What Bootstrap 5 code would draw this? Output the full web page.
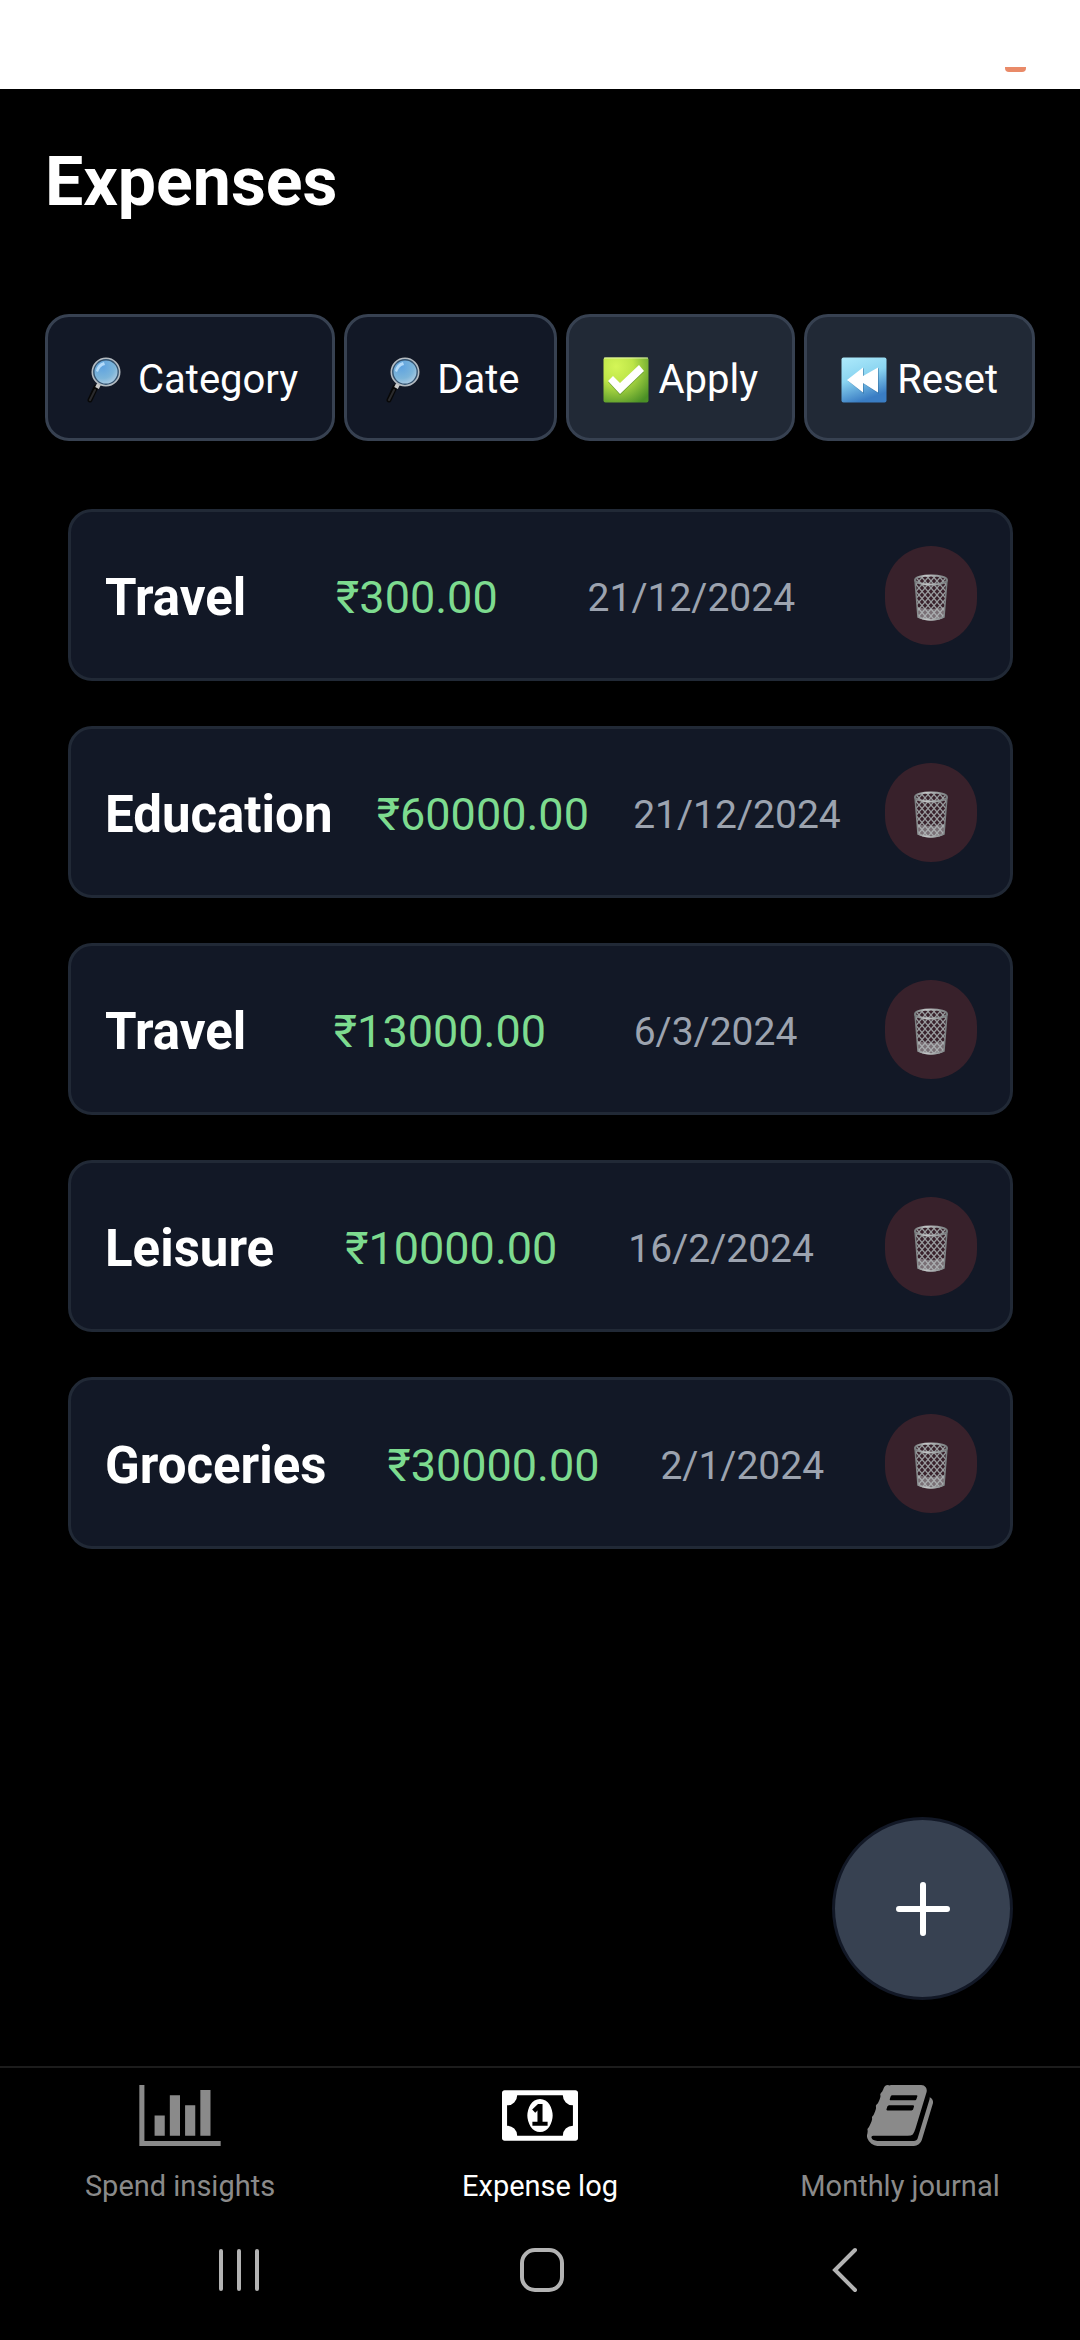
<!DOCTYPE html>
<html lang="en">
<head>
<meta charset="utf-8">
<meta name="viewport" content="width=device-width, initial-scale=1">
<title>Expenses</title>
<link href="https://cdn.jsdelivr.net/npm/bootstrap@5.3.0/dist/css/bootstrap.min.css" rel="stylesheet">
<style>
body{background:#000;color:#fff;font-family:Roboto,"Noto Sans",sans-serif}
svg{display:block;flex:none}
.status-strip{height:89px;padding:0 54px 17px;background:#fff}
.status-strip span{width:21px;height:5px;border-radius:0 0 4px 4px;background:#e98a68}
.page-body{padding:47px 45px 66px}
.page-title{font-size:68px;line-height:92px;font-weight:700;margin:0 0 86px}
.filter-row{gap:9px}
.filter-btn{height:127px;padding:4px 34px 0;border:3px solid #374151;border-radius:24px;background:#121826;color:#fff;font-size:40px;line-height:46px;gap:10px}
.filter-btn.solid{background:#212936}
.filter-btn:hover{border-color:#374151;background:#212936;color:#fff}
.expense-list{padding:68px 22px 45px 23px;gap:45px;margin:0}
.expense-item{height:172px;padding:0 33px 0 34px;border:3px solid #212936;border-radius:24px;background:#121826}
.expense-item span{padding-top:6px}
.item-name{font-size:51px;line-height:68px;font-weight:700}
.item-sum{font-size:45px;line-height:60px;color:#7ddb8f}
.item-date{font-size:39px;line-height:54px;color:#9ca3af}
.item-del{width:92px;height:99px;padding:6px 0 0;border:0;border-radius:46px;background:#38212b}
.add-btn{width:181px;height:183px;padding:0;border:3px solid #121826;border-radius:50%;background:#374151;margin-right:22px}
.tab-strip{border-top:2px solid #1c1c1c;padding-top:17px;height:156px}
.tab-link{color:#8a8a8a;font-size:29px;line-height:40px;text-decoration:none;gap:20px}
.tab-link.current{color:#fff}
.tab-link:hover{color:#fff}
.sys-strip{height:118px;padding:0 84px 22px 88px}
.sys-btn{height:96px;padding:0;border:0;background:none}
</style>
</head>
<body class="d-flex flex-column min-vh-100">
<svg width="0" height="0" class="position-absolute" aria-hidden="true">
  <defs>
    <radialGradient id="lens" cx="38%" cy="30%" r="80%"><stop offset="0" stop-color="#5fa3e0"/><stop offset=".55" stop-color="#7cb5da"/><stop offset="1" stop-color="#c6d6e6"/></radialGradient>
    <radialGradient id="leaf" cx="28%" cy="20%" r="95%"><stop offset="0" stop-color="#d4f657"/><stop offset=".4" stop-color="#bde548"/><stop offset="1" stop-color="#4a8f26"/></radialGradient>
    <linearGradient id="ice" x1="0" y1="0" x2=".35" y2="1"><stop offset="0" stop-color="#aeeafb"/><stop offset=".5" stop-color="#8bd5f1"/><stop offset="1" stop-color="#3a7dc4"/></linearGradient>
    <linearGradient id="wire" x1="0" x2="1"><stop offset="0" stop-color="#777c7e"/><stop offset=".35" stop-color="#c4c7c8"/><stop offset="1" stop-color="#777c7e"/></linearGradient>
    <pattern id="mesh" width="6" height="7" patternUnits="userSpaceOnUse"><path d="M0 0L6 7M6 0L0 7" stroke="#999c9e" stroke-width="1.3"/></pattern>
    <symbol id="ico-search" viewBox="0 0 46 46">
      <path d="M14 30L8 43" stroke="#080808" stroke-width="5" stroke-linecap="round"/>
      <path d="M13 33L8 43" stroke="#2b2b2d" stroke-width="2" stroke-linecap="round"/>
      <path d="M17 27l-2 4" stroke="#c9c9c9" stroke-width="4"/>
      <circle cx="24" cy="15" r="13.5" fill="url(#lens)" stroke="#b5bcc2" stroke-width="2"/>
      <circle cx="24" cy="15" r="12.2" fill="none" stroke="#35536f" stroke-width="1.4"/>
      <path d="M14 14q1-7 8-9l1 3q-5 1-7 7z" fill="#c5e6ff" opacity=".8"/>
    </symbol>
    <symbol id="ico-check" viewBox="0 0 46 46">
      <rect x=".5" y=".5" width="45" height="45" rx="2" fill="url(#leaf)"/>
      <path d="M1 1h44" stroke="#eef9c0" opacity=".8"/>
      <path d="M5 25l5-5 7 7L36 9l5 6-24 23z" fill="#356f20" opacity=".5"/>
      <path d="M5 24l5-5 7 7L36 8l5 6-24 23z" fill="#fff"/>
    </symbol>
    <symbol id="ico-rewind" viewBox="0 0 46 46">
      <rect x=".5" y=".5" width="45" height="45" rx="2" fill="url(#ice)"/>
      <path d="M7 24L23 11v9l15-9v26l-15-10v10z" fill="#2b6797" opacity=".5"/>
      <path d="M6 23L22 10.500v8.500l15-8.500v25l-15-9.500v9.500z" fill="#fff"/>
    </symbol>
    <symbol id="ico-bin" viewBox="0 0 36 48">
      <path d="M2 6h32l-3 38q-13 5-26 0z" fill="url(#mesh)"/>
      <path d="M4.500 33q13.500 4 27 0l-1 11q-12.500 5-25 0z" fill="#b9bebf" opacity=".5"/>
      <path d="M2 6l3 37q13 6 26 0l3-37" fill="none" stroke="url(#wire)" stroke-width="1.500"/>
      <ellipse cx="18" cy="6" rx="16" ry="4.500" fill="#38212b"/>
      <ellipse cx="18" cy="6" rx="16" ry="4.500" fill="url(#mesh)" stroke="url(#wire)" stroke-width="2"/>
    </symbol>
  </defs>
</svg>

<div class="status-strip d-flex justify-content-end align-items-end"><span></span></div>

<main class="page-body flex-grow-1 d-flex flex-column">
  <h1 class="page-title">Expenses</h1>
  <div class="filter-row d-flex">
    <button type="button" class="btn filter-btn d-flex align-items-center"><svg width="46" height="46"><use href="#ico-search"/></svg>Category</button>
    <button type="button" class="btn filter-btn d-flex align-items-center"><svg width="46" height="46"><use href="#ico-search"/></svg>Date</button>
    <button type="button" class="btn filter-btn solid d-flex align-items-center"><svg width="46" height="46"><use href="#ico-check"/></svg>Apply</button>
    <button type="button" class="btn filter-btn solid d-flex align-items-center"><svg width="46" height="46"><use href="#ico-rewind"/></svg>Reset</button>
  </div>

  <ul class="expense-list list-unstyled d-flex flex-column">
    <li class="expense-item d-flex align-items-center justify-content-between"><span class="item-name">Travel</span><span class="item-sum">₹300.00</span><span class="item-date">21/12/2024</span><button type="button" class="btn item-del d-flex align-items-center justify-content-center" aria-label="Delete"><svg width="36" height="48"><use href="#ico-bin"/></svg></button></li>
    <li class="expense-item d-flex align-items-center justify-content-between"><span class="item-name">Education</span><span class="item-sum">₹60000.00</span><span class="item-date">21/12/2024</span><button type="button" class="btn item-del d-flex align-items-center justify-content-center" aria-label="Delete"><svg width="36" height="48"><use href="#ico-bin"/></svg></button></li>
    <li class="expense-item d-flex align-items-center justify-content-between"><span class="item-name">Travel</span><span class="item-sum">₹13000.00</span><span class="item-date">6/3/2024</span><button type="button" class="btn item-del d-flex align-items-center justify-content-center" aria-label="Delete"><svg width="36" height="48"><use href="#ico-bin"/></svg></button></li>
    <li class="expense-item d-flex align-items-center justify-content-between"><span class="item-name">Leisure</span><span class="item-sum">₹10000.00</span><span class="item-date">16/2/2024</span><button type="button" class="btn item-del d-flex align-items-center justify-content-center" aria-label="Delete"><svg width="36" height="48"><use href="#ico-bin"/></svg></button></li>
    <li class="expense-item d-flex align-items-center justify-content-between"><span class="item-name">Groceries</span><span class="item-sum">₹30000.00</span><span class="item-date">2/1/2024</span><button type="button" class="btn item-del d-flex align-items-center justify-content-center" aria-label="Delete"><svg width="36" height="48"><use href="#ico-bin"/></svg></button></li>
  </ul>

  <button type="button" class="btn add-btn mt-auto align-self-end d-flex align-items-center justify-content-center" aria-label="Add expense">
    <svg width="54" height="54" viewBox="0 0 54 54"><path d="M27 3v48M3 27h48" stroke="#fff" stroke-width="6" stroke-linecap="round"/></svg>
  </button>
</main>

<nav class="tab-strip d-flex">
  <a href="#insights" class="tab-link d-flex flex-column align-items-center flex-fill w-100">
    <svg width="82" height="61" viewBox="0 0 2048 1536" fill="currentColor"><path d="M640 768v512H384V768zM1024 256v1024H768V256zM2048 1408v128H0V0h128v1408zM1408 512v768h-256V512zM1792 128v1152h-256V128z"/></svg>
    Spend insights
  </a>
  <a href="#log" class="tab-link current d-flex flex-column align-items-center flex-fill w-100" aria-current="page">
    <svg width="76" height="61" viewBox="0 128 1920 1536" fill="currentColor"><path d="M768 1152h384v-96h-128v-448h-114l-148 137 77 80q42-37 55-57h2v288h-128v96zm512-256q0 70-21 142t-59.500 134-101.500 101-138 39-138-39-101.500-101-59.500-134-21-142 21-142 59.500-134 101.500-101 138-39 138 39 101.500 101 59.500 134 21 142zm512 256v-512q-106 0-181-75t-75-181h-1152q0 106-75 181t-181 75v512q106 0 181 75t75 181h1152q0-106 75-181t181-75zm128-832v1152q0 26-19 45t-45 19h-1792q-26 0-45-19t-19-45v-1152q0-26 19-45t45-19h1792q26 0 45 19t19 45z"/></svg>
    Expense log
  </a>
  <a href="#journal" class="tab-link d-flex flex-column align-items-center flex-fill w-100">
    <svg width="66" height="61" viewBox="0 128 1664 1536" fill="currentColor"><path d="M1639 478q40 57 18 129l-275 906q-19 64-76.500 107.500t-122.500 43.500h-923q-77 0-148.500-53.500t-99.500-131.500q-24-67-2-127 0-4 3-27t4-37q1-8-3-21.500t-3-19.500q2-11 8-21t16.500-23.500 16.500-23.500q23-38 45-91.500t30-91.500q3-10 .5-30t-.5-28q3-11 17-28t17-23q21-36 42-92t25-90q1-9-2.500-32t.5-28q4-13 22-30.500t22-22.500q19-26 42.500-84.500t27.500-96.500q1-8-3-25.500t-2-26.500q2-8 9-18t18-23 17-21q8-12 16.500-30.500t15-35 16-36 19.500-32 26.500-23.500 36-11.500 47.500 5.500l-1 3q38-9 51-9h761q74 0 114 56t18 130l-274 906q-36 119-71.500 153.500t-128.500 34.500h-869q-27 0-38 15-11 16-1 43 24 70 144 70h923q29 0 56-15.500t35-41.500l300-987q7-22 5-57 38 15 59 43zm-1064 2q-4 13 2 22.500t20 9.500h608q13 0 25.500-9.500t16.500-22.500l21-64q4-13-2-22.500t-20-9.500h-608q-13 0-25.500 9.500t-16.500 22.500zm-83 256q-4 13 2 22.500t20 9.500h608q13 0 25.500-9.500t16.500-22.500l21-64q4-13-2-22.500t-20-9.500h-608q-13 0-25.500 9.500t-16.500 22.500z"/></svg>
    Monthly journal
  </a>
</nav>

<div class="sys-strip d-flex">
  <button type="button" class="btn sys-btn flex-fill w-100 d-flex align-items-center justify-content-center" aria-label="Recent apps"><svg width="40" height="44" viewBox="0 0 40 44"><path d="M2 3v38M20 3v38M38 3v38" stroke="#b3b3b3" stroke-width="4" stroke-linecap="round"/></svg></button>
  <button type="button" class="btn sys-btn flex-fill w-100 d-flex align-items-center justify-content-center" aria-label="Home"><svg width="44" height="44" viewBox="0 0 44 44"><rect x="2" y="2" width="40" height="40" rx="13" fill="none" stroke="#b3b3b3" stroke-width="4"/></svg></button>
  <button type="button" class="btn sys-btn flex-fill w-100 d-flex align-items-center justify-content-center" aria-label="Back"><svg width="26" height="46" viewBox="0 0 26 46"><path d="M23 3L3 23l20 20" fill="none" stroke="#b3b3b3" stroke-width="4" stroke-linecap="round"/></svg></button>
</div>
<script src="https://cdn.jsdelivr.net/npm/bootstrap@5.3.0/dist/js/bootstrap.bundle.min.js"></script>
</body>
</html>
